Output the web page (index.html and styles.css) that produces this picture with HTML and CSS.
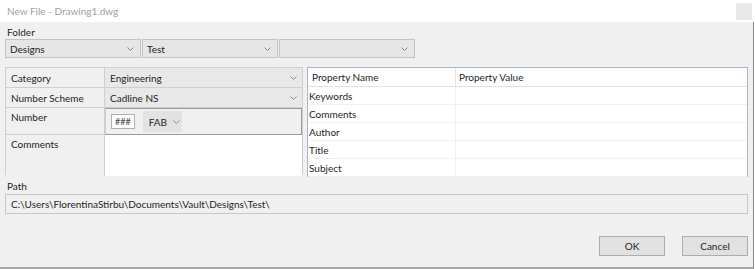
FILE: index.html
```html
<!DOCTYPE html>
<html lang="en">
<head>
    <meta charset="UTF-8">
    <title>New File - Drawing1.dwg</title>
    <link rel="stylesheet" href="styles.css">
</head>
<body>
    <div class="window">
        <div class="titlebar">
            <span class="title">New File - Drawing1.dwg</span>
            <span class="close"></span>
        </div>

        <div class="dialog">
            <div class="label">Folder</div>
            <div class="folder-row">
                <div class="combo"><span>Designs</span><svg class="chev" width="7" height="4" viewBox="0 0 7 4"><polyline points="0.5,0.5 3.5,3.5 6.5,0.5"/></svg></div>
                <div class="combo"><span>Test</span><svg class="chev" width="7" height="4" viewBox="0 0 7 4"><polyline points="0.5,0.5 3.5,3.5 6.5,0.5"/></svg></div>
                <div class="combo"><span></span><svg class="chev" width="7" height="4" viewBox="0 0 7 4"><polyline points="0.5,0.5 3.5,3.5 6.5,0.5"/></svg></div>
            </div>

            <div class="main">
                <div class="fields">
                    <div class="cell name r1">Category</div>
                    <div class="cell value drop r1"><span>Engineering</span><svg class="chev" width="7" height="4" viewBox="0 0 7 4"><polyline points="0.5,0.5 3.5,3.5 6.5,0.5"/></svg></div>

                    <div class="cell name r2">Number Scheme</div>
                    <div class="cell value drop r2"><span>Cadline NS</span><svg class="chev" width="7" height="4" viewBox="0 0 7 4"><polyline points="0.5,0.5 3.5,3.5 6.5,0.5"/></svg></div>

                    <div class="cell name r3">Number</div>
                    <div class="cell value number r3">
                        <span class="hash">###</span>
                        <span class="fab">FAB <svg class="chev" width="7" height="4" viewBox="0 0 7 4"><polyline points="0.5,0.5 3.5,3.5 6.5,0.5"/></svg></span>
                    </div>

                    <div class="cell name r4">Comments</div>
                    <div class="cell value memo r4"></div>
                </div>

                <div class="props">
                    <div class="prow head">
                        <div class="pname">Property Name</div>
                        <div class="pvalue">Property Value</div>
                    </div>
                    <div class="prow"><div class="pname">Keywords</div><div class="pvalue"></div></div>
                    <div class="prow"><div class="pname">Comments</div><div class="pvalue"></div></div>
                    <div class="prow"><div class="pname">Author</div><div class="pvalue"></div></div>
                    <div class="prow"><div class="pname">Title</div><div class="pvalue"></div></div>
                    <div class="prow"><div class="pname">Subject</div><div class="pvalue"></div></div>
                </div>
            </div>

            <div class="label path-label">Path</div>
            <div class="path">C:\Users\FlorentinaStirbu\Documents\Vault\Designs\Test\</div>

            <div class="buttons">
                <button class="btn">OK</button>
                <button class="btn">Cancel</button>
            </div>
        </div>
    </div>
</body>
</html>
```

FILE: styles.css
```css
body {
    margin: 0;
    padding: 0;
    background-color: #ffffff;
    font-family: Lato, "Open Sans", sans-serif;
    font-size: 10px;
    color: #1e1e1e;
}
.window {
    width: 755px;
    height: 269px;
    overflow: hidden;
}
.titlebar {
    height: 22px;
    display: flex;
    align-items: center;
    justify-content: space-between;
    padding: 0 3px 0 7px;
    box-sizing: border-box;
    background-color: #ffffff;
}
.title {
    color: #a0a0a0;
    font-size: 10px;
}
.close {
    width: 16px;
    height: 17px;
    background-color: #e9e9e9;
    margin-top: 1px;
}
.dialog {
    width: 754px;
    height: 247px;
    box-sizing: border-box;
    background-color: #f0f0f0;
    border-right: 1px solid #8a8a8a;
    border-bottom: 2px solid #a8a8a8;
    padding: 3px 5px 0 5px;
}
.label {
    padding-left: 2px;
    height: 14px;
    line-height: 14px;
}
.folder-row {
    display: flex;
    gap: 1px;
}
.combo {
    width: 136px;
    height: 19px;
    box-sizing: border-box;
    border: 1px solid #c4c4c4;
    background-color: #e6e6e6;
    display: flex;
    align-items: center;
    justify-content: space-between;
    padding: 0 6px 0 4px;
}
.chev {
    fill: none;
    stroke: #8a8a8a;
    stroke-width: 1;
}
.main {
    display: flex;
    gap: 4px;
    margin-top: 9px;
}
.fields {
    width: 298px;
    display: grid;
    grid-template-columns: 99px 1fr;
    grid-template-rows: 20px 20px 27px 41px;
    border: 1px solid #cfcfcf;
    box-sizing: border-box;
    height: 108px;
}
.cell {
    box-sizing: border-box;
    border-bottom: 1px solid #cfcfcf;
    padding: 0 5px;
    display: flex;
    align-items: center;
}
.name {
    border-right: 1px solid #cfcfcf;
    background-color: #f0f0f0;
}
.r3.name, .r4.name {
    align-items: flex-start;
    padding-top: 3px;
}
.r4 {
    border-bottom: none;
}
.value.drop {
    background-color: #e8e8e8;
    justify-content: space-between;
    padding-right: 5px;
}
.value.number {
    background-color: #f0f0f0;
    border: 1px solid #9a9a9a;
    border-left-color: #cfcfcf;
    padding: 0 0 0 5px;
    gap: 8px;
}
.hash {
    border: 1px solid #b0b0b0;
    background-color: #ffffff;
    font-size: 9px;
    height: 13px;
    line-height: 13px;
    padding: 0 3px;
    color: #444;
}
.fab {
    background-color: #e2e2e2;
    height: 21px;
    width: 39px;
    box-sizing: border-box;
    display: flex;
    align-items: center;
    gap: 6px;
    padding-left: 6px;
}
.value.memo {
    background-color: #ffffff;
}
.props {
    width: 441px;
    height: 110px;
    box-sizing: border-box;
    border: 1px solid #a9b8c8;
    background-color: #ffffff;
}
.prow {
    display: flex;
    height: 18px;
    border-bottom: 1px solid #f0f0f0;
    box-sizing: border-box;
}
.prow.head {
    height: 19px;
    border-bottom: 1px solid #e2e2e2;
}
.pname {
    width: 146px;
    border-right: 1px solid #f0f0f0;
    padding-left: 1px;
    display: flex;
    align-items: center;
}
.head .pname {
    padding-left: 4px;
    border-right-color: #e2e2e2;
    width: 143px;
}
.pvalue {
    flex: 1;
    display: flex;
    align-items: center;
    padding-left: 3px;
}
.path-label {
    margin-top: 3px;
    height: 13px;
    line-height: 13px;
}
.path {
    margin-top: 1px;
    height: 20px;
    box-sizing: border-box;
    border: 1px solid #c8c8c8;
    padding-left: 5px;
    display: flex;
    align-items: center;
}
.buttons {
    display: flex;
    justify-content: flex-end;
    gap: 17px;
    margin-top: 22px;
}
.btn {
    width: 66px;
    height: 20px;
    background-color: #e1e1e1;
    border: 1px solid #adadad;
    font-family: inherit;
    font-size: 10px;
    color: #1e1e1e;
    padding: 0;
}
```
